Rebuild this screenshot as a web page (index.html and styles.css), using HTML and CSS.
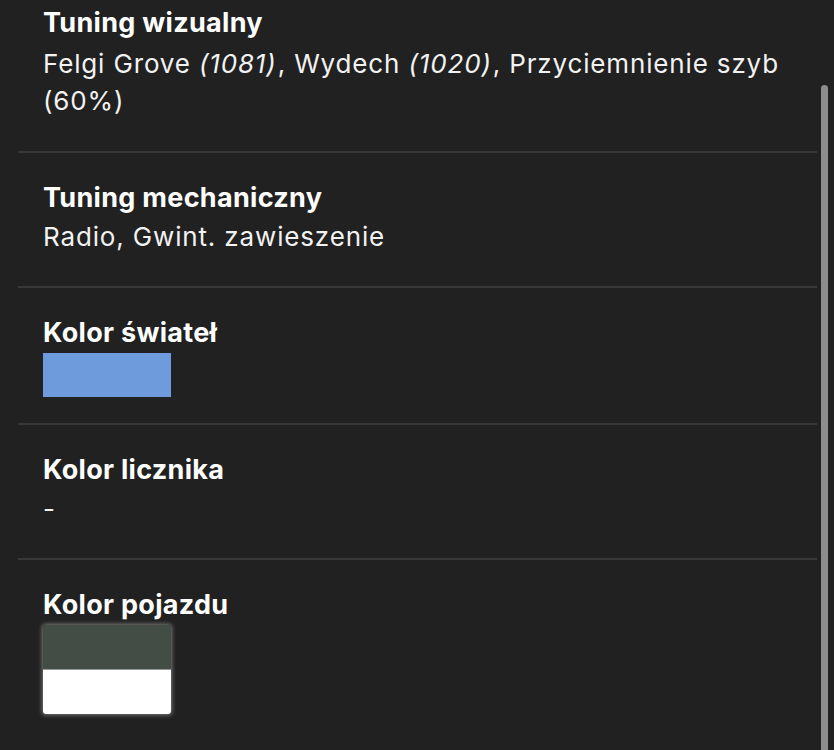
FILE: index.html
```html
<!DOCTYPE html>
<html lang="pl">
<head>
  <meta charset="UTF-8">
  <meta name="viewport" content="width=device-width, initial-scale=1.0">
  <title>Szczegóły pojazdu</title>
  <link rel="stylesheet" href="styles.css">
</head>
<body>

<div class="details">
  <div class="item">
    <div class="label">Tuning wizualny</div>
    <div class="value">Felgi Grove <i>(1081)</i>, Wydech <i>(1020)</i>, Przyciemnienie szyb (60%)</div>
  </div>

  <div class="item">
    <div class="label">Tuning mechaniczny</div>
    <div class="value">Radio, Gwint. zawieszenie</div>
  </div>

  <div class="item item-color">
    <div class="label">Kolor świateł</div>
    <div class="swatch" style="background: #6e9bdb;"></div>
  </div>

  <div class="item">
    <div class="label">Kolor licznika</div>
    <div class="value">-</div>
  </div>

  <div class="item item-color">
    <div class="label">Kolor pojazdu</div>
    <div class="swatches">
      <div class="swatch" style="background: #444d45;"></div>
      <div class="swatch" style="background: #ffffff;"></div>
    </div>
  </div>
</div>

<div class="scroll-thumb"></div>

</body>
</html>
```

FILE: styles.css
```css
body {
  background: #212121;
  color: #f2f2f2;
  font-family: Inter, "Noto Sans", sans-serif;
  margin: 0;
  overflow: hidden;
}
.details {
  margin: 0 17px 0 18px;
}
.item {
  padding: 27px 0 31px 25px;
  border-bottom: 2px solid #383838;
}
.item:first-child {
  padding-top: 5px;
  padding-bottom: 32px;
}
.item:last-child {
  border-bottom: none;
}
.item-color {
  padding-bottom: 26px;
}
.label {
  font-size: 27px;
  font-weight: 700;
  line-height: 36px;
  letter-spacing: 0.3px;
  color: #fff;
  margin-bottom: 2px;
}
.item:first-child .label {
  margin-bottom: 4px;
}
.value {
  font-size: 26px;
  line-height: 37px;
  letter-spacing: 0.85px;
}
.value i {
  font-style: italic;
  padding-right: 1px;
}
.swatch {
  width: 128px;
  height: 44px;
}
.swatches {
  display: inline-flex;
  flex-direction: column;
  border-radius: 3px;
  overflow: hidden;
  box-shadow: 0 0 4px 1px rgba(255, 255, 255, 0.4);
}
.swatches .swatch + .swatch {
  border-top: 1px solid #9a9a9a;
}
.scroll-thumb {
  position: fixed;
  top: 85px;
  bottom: -10px;
  right: 6px;
  width: 7px;
  border-radius: 4px;
  background: #8d8d8d;
}
```
